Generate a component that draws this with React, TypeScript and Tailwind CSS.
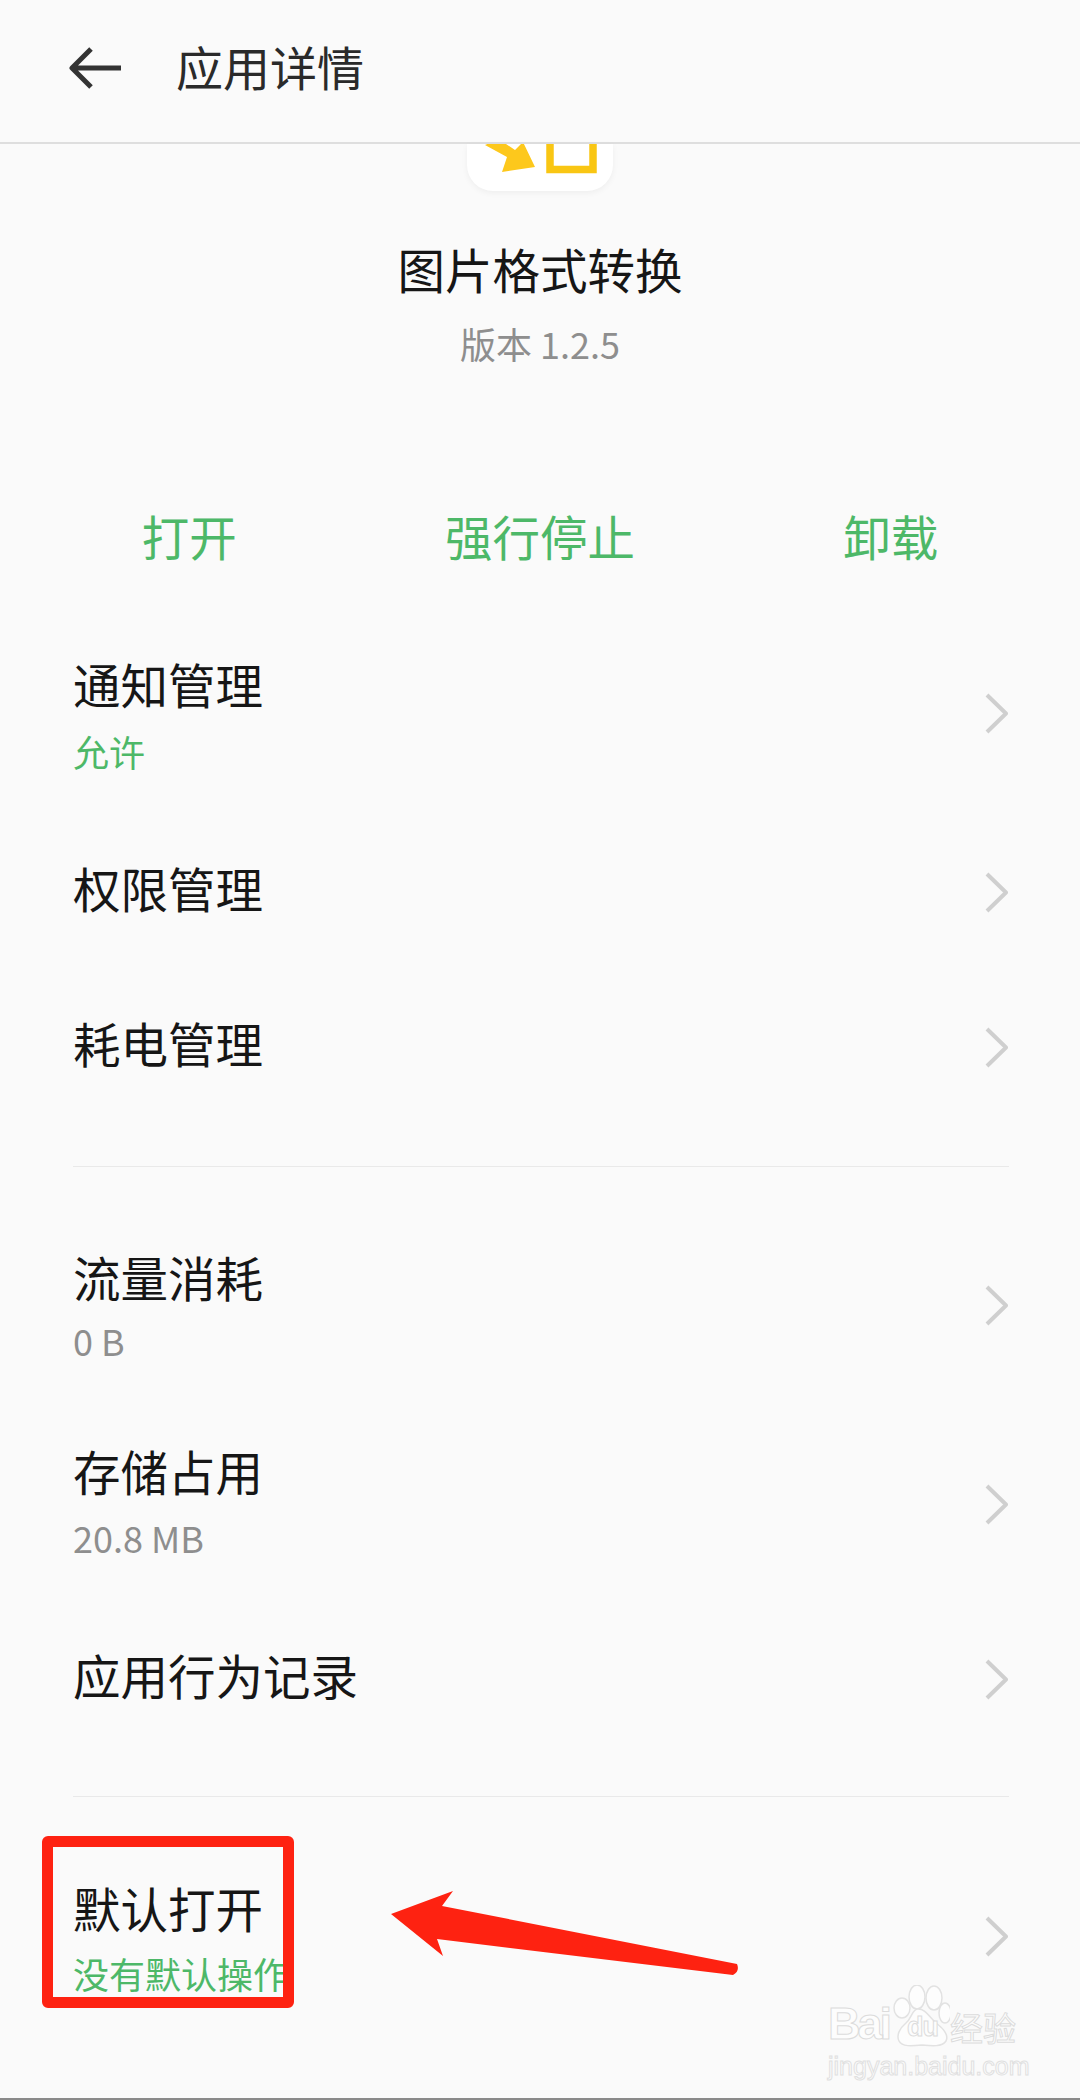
import React from 'react';

const Chevron = ({ className = '' }: { className?: string }) => (
  <svg width="23" height="41" viewBox="0 0 23 41" fill="none" className={className}>
    <path d="M2 2 L21 20.5 L2 39" stroke="#cfcfcf" strokeWidth="4" strokeLinejoin="round" />
  </svg>
);

type RowProps = {
  title: string;
  sub?: string;
  subClass?: string;
  gapClass?: string;
  className: string;
  chevronClass?: string;
};

const Row = ({ title, sub, subClass, gapClass, className, chevronClass }: RowProps) => (
  <div className={`flex items-center justify-between pl-[73px] pr-[72px] ${className}`}>
    <div className="-translate-y-[4px]">
      <div className="text-[47.5px] leading-[60px] text-[#161616]">{title}</div>
      {sub && <div className={`text-[36px] leading-[44px] ${gapClass} ${subClass}`}>{sub}</div>}
    </div>
    <Chevron className={chevronClass} />
  </div>
);

const Watermark = () => (
  <div
    className="absolute left-[828px] top-[1985px] w-[195px] h-[95px] text-[#fdfdfd] whitespace-nowrap"
    style={{ fontFamily: '"Liberation Sans", "Noto Sans CJK SC", sans-serif' }}
  >
    <div className="flex h-[68px] items-end [-webkit-text-stroke:1px_#dcdcdc]">
      <span className="w-[64px] text-[45px] leading-[58px] font-bold tracking-[-3px]">Bai</span>
      <div className="relative w-[58px] h-[68px]">
        <svg width="58" height="68" viewBox="0 0 58 68" className="absolute left-0 top-0">
          <g fill="#fdfdfd" stroke="#e2e2e2" strokeWidth="1.5">
            <ellipse cx="10" cy="23" rx="8" ry="10" />
            <ellipse cx="25" cy="12" rx="8" ry="12" />
            <ellipse cx="42" cy="13" rx="8" ry="12" />
            <ellipse cx="53" cy="28" rx="6" ry="10" />
            <path d="M26 24 C34 24 37 32 44 38 C52 44 57 50 54 56 C50 62 40 61 30 60 C20 61 10 62 7 56 C4 50 8 43 14 38 C20 33 20 24 26 24 Z" />
          </g>
        </svg>
        <span className="absolute left-[15px] top-[28px] text-[27px] leading-[28px] font-bold tracking-[-1px]">du</span>
      </div>
      <span
        className="mb-[6px] text-[33px] leading-[40px]"
        style={{ fontFamily: '"Noto Sans CJK SC", sans-serif' }}
      >
        经验
      </span>
    </div>
    <div className="text-[25px] leading-[27px] [-webkit-text-stroke:1px_#e0e0e0]">jingyan.baidu.com</div>
  </div>
);

const App = () => {
  return (
    <div
      className="relative w-[1080px] h-[2100px] overflow-hidden bg-[#fafafa]"
      style={{ fontFamily: '"Noto Sans CJK SC", "Noto Sans", sans-serif' }}
    >
      {/* header */}
      <div className="flex items-center h-[144px] border-b-2 border-[#dedede] pl-[69px]">
        <svg width="54" height="42" viewBox="0 0 54 42" fill="none" className="mb-[6px]">
          <path d="M52 21 H4 M22 2 L3 21 L22 40" stroke="#333" strokeWidth="5" strokeLinejoin="round" />
        </svg>
        <span className="ml-[53px] mb-[9px] text-[47px] text-[#2a2a2a]">应用详情</span>
      </div>

      {/* app summary */}
      <div className="flex flex-col items-center">
        <div className="-ml-[1px] w-[146px] h-[47px] rounded-b-[26px] bg-white shadow-[0_2px_6px_rgba(0,0,0,0.05)] overflow-hidden">
          <svg width="146" height="47" viewBox="0 0 146 47">
            <path d="M18 1 L25 -2 L36 -2 L48 6 L56 -2 L68 23 L35 28 L40 13 Z" fill="#fdc81c" />
            <path d="M83 -2 V25.5 H126 V-2" fill="none" stroke="#f9c613" strokeWidth="7.5" />
          </svg>
        </div>
        <div className="mt-[48px] text-[47.5px] leading-[60px] text-[#161616]">图片格式转换</div>
        <div className="mt-[24px] text-[36px] leading-[40px] text-[#8e8e8e]">版本 1.2.5</div>
      </div>

      {/* actions */}
      <div className="grid grid-cols-3 mt-[143px] px-[14px] text-center text-[47.5px] leading-[60px] text-[#4db868]">
        <span>打开</span>
        <span>强行停止</span>
        <span>卸载</span>
      </div>

      <Row title="通知管理" sub="允许" subClass="text-[#4db868]" gapClass="mt-[15px]" className="mt-[92px]" chevronClass="mb-[9px]" />
      <Row title="权限管理" className="mt-[85px]" />
      <Row title="耗电管理" className="mt-[95px]" />

      <div className="mt-[89px] mx-[73px] w-[936px] h-[1px] bg-[#e9e9e9]" />

      <Row title="流量消耗" sub="0 B" subClass="text-[#8e8e8e]" gapClass="mt-[11px]" className="mt-[84px]" chevronClass="mb-[7px]" />
      <Row title="存储占用" sub="20.8 MB" subClass="text-[#8e8e8e]" gapClass="mt-[14px]" className="mt-[79px]" />
      <Row title="应用行为记录" className="mt-[86px]" />

      <div className="mt-[87px] mx-[73px] w-[936px] h-[1px] bg-[#e9e9e9]" />

      <Row title="默认打开" sub="没有默认操作" subClass="text-[#4db868]" gapClass="mt-[13px]" className="mt-[85px]" chevronClass="mb-[9px]" />

      {/* annotation */}
      <div className="absolute left-[42px] top-[1836px] w-[252px] h-[172px] border-[11px] border-[#fe2211] rounded-[6px]" />
      <svg className="absolute left-[385px] top-[1885px]" width="360" height="95" viewBox="0 0 360 95">
        <path d="M6 29 L68 6 L57 21 L352 79 Q355 86 348 90 L52 54 L58 71 Z" fill="#fe2211" />
      </svg>

      <Watermark />
      <div className="absolute left-0 bottom-0 w-full h-[2px] bg-[#8a8a8a]" />
    </div>
  );
};

export default App;
